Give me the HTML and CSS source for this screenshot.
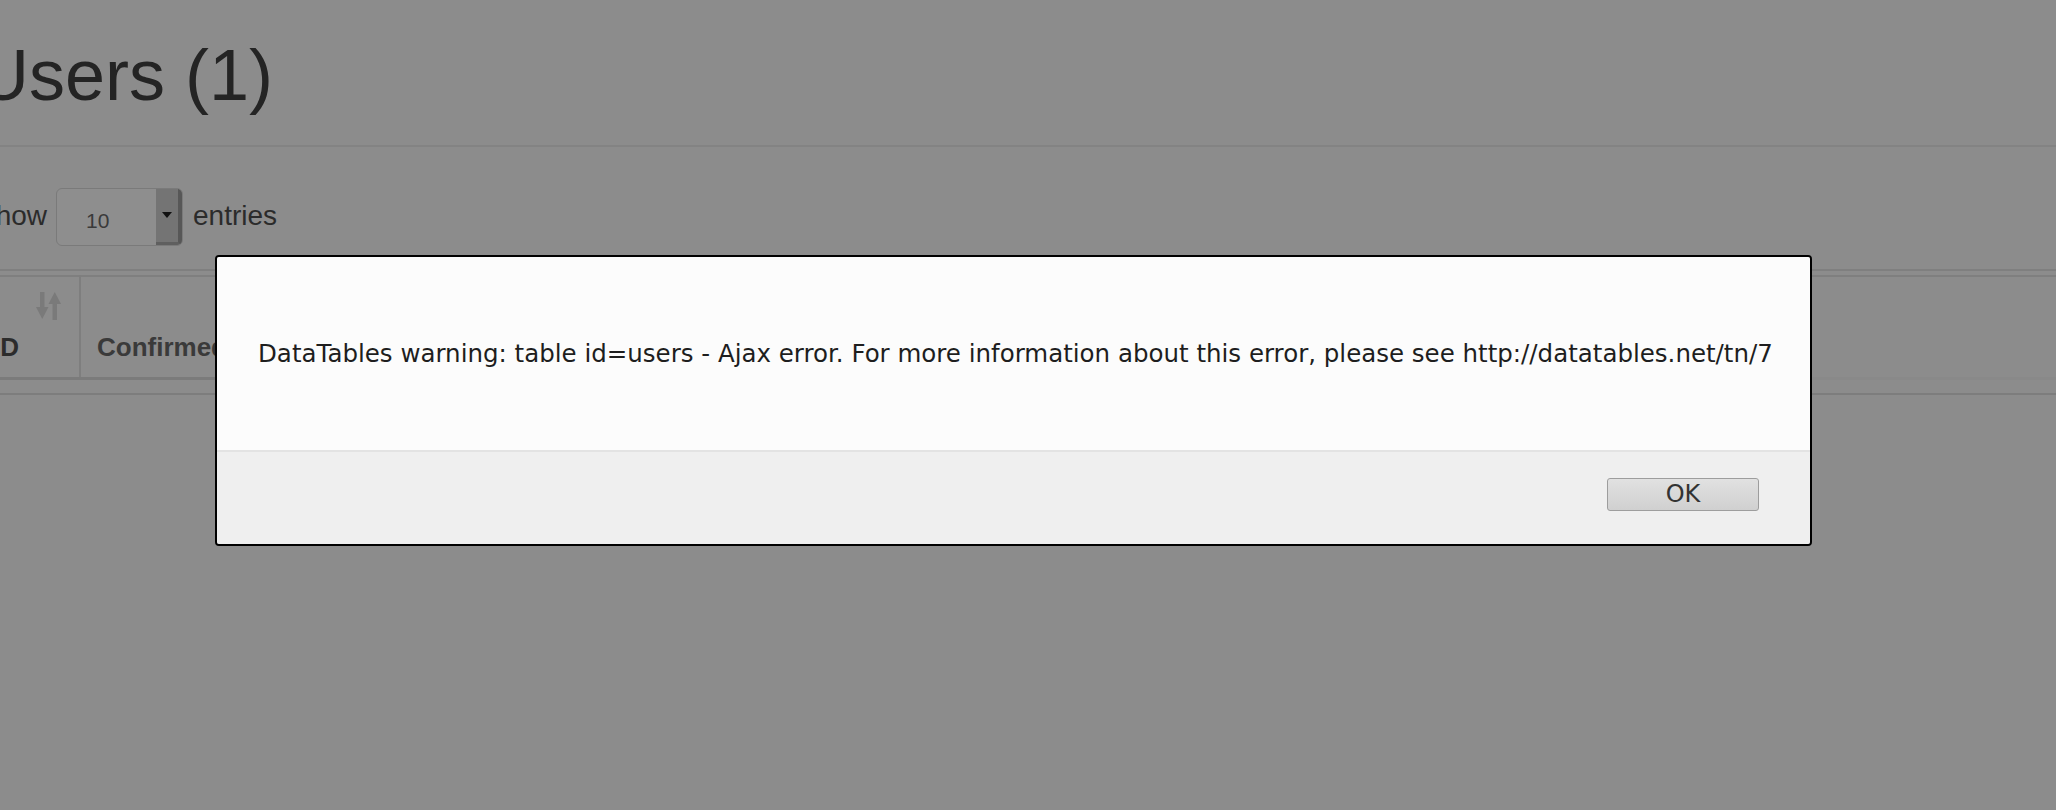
FILE: index.html
```html
<!DOCTYPE html>
<html lang="en">
<head>
<meta charset="utf-8">
<title>Users</title>
<link rel="stylesheet" href="styles.css">
</head>
<body>
<div class="page">
  <div class="page-header">
    <h1 class="title">Users (1)</h1>
  </div>
  <div class="length">
    <span class="length-label">Show</span>
    <div class="select">
      <span class="select-value">10</span>
      <span class="select-button"><span class="caret"></span></span>
    </div>
    <span class="length-label">entries</span>
  </div>
  <div class="table-wrap">
    <table class="table">
      <thead>
        <tr>
          <th class="col-id">
            <svg class="sort-icon" viewBox="0 0 26 28" width="26" height="28" aria-hidden="true">
              <rect x="4" y="0" width="4.5" height="18" />
              <polygon points="0,15 12.5,15 6.25,27" />
              <polygon points="12.5,12 25,12 18.75,0" />
              <rect x="16.5" y="10" width="4.5" height="18" />
            </svg>
            ID
          </th>
          <th class="col-confirmed">Confirmed</th>
          <th class="col-rest"></th>
        </tr>
      </thead>
    </table>
    <div class="table-foot"></div>
  </div>
</div>

<div class="dialog" role="alertdialog">
  <div class="dialog-body">
    <p class="dialog-text">DataTables warning: table id=users - Ajax error. For more information about this error, please see http://datatables.net/tn/7</p>
  </div>
  <div class="dialog-footer">
    <button class="dialog-button" type="button">OK</button>
  </div>
</div>
</body>
</html>
```

FILE: styles.css
```css
html, body {
  margin: 0;
  padding: 0;
}

body {
  background: #8c8c8c;
  width: 2056px;
  height: 810px;
  overflow: hidden;
  font-family: "Liberation Sans", Arial, sans-serif;
  color: #2a2a2a;
}

.page {
  margin-left: -23px;
  width: 2079px;
}

.page-header {
  padding-top: 36px;
  padding-bottom: 30px;
  border-bottom: 2px solid #838383;
}

.title {
  margin: 0;
  font-size: 72px;
  font-weight: 400;
  line-height: 79px;
  color: #242424;
}

.length {
  display: flex;
  align-items: center;
  margin-top: 41px;
  height: 58px;
  font-size: 28px;
  color: #2b2b2b;
}

.length-label {
  position: relative;
  top: -1px;
}

.select {
  display: flex;
  width: 127px;
  height: 58px;
  box-sizing: border-box;
  margin: 0 10px 0 9px;
  border: 1px solid #7a7a7a;
  border-radius: 6px;
  background: #8e8e8e;
  overflow: hidden;
}

.select-value {
  flex: 1;
  padding-left: 29px;
  padding-top: 9px;
  font-size: 21px;
  line-height: 46px;
  color: #3a3a3a;
}

.select-button {
  width: 26px;
  display: flex;
  justify-content: center;
  padding-top: 23px;
  box-sizing: border-box;
  background: #747474;
  border-right: 4px solid #575757;
  border-bottom: 3px solid #5f5f5f;
}

.caret {
  width: 0;
  height: 0;
  border-left: 5px solid transparent;
  border-right: 5px solid transparent;
  border-top: 6px solid #111;
}

.table-wrap {
  margin-top: 23px;
  border-top: 2px solid #7f7f7f;
  padding-top: 4px;
}

.table {
  width: 100%;
  border-collapse: collapse;
  border-top: 2px solid #7f7f7f;
}

.table th {
  height: 102px;
  padding: 0 16px 15px;
  box-sizing: border-box;
  vertical-align: bottom;
  text-align: left;
  font-size: 26px;
  font-weight: 700;
  line-height: 30px;
  color: #2c2c2c;
  border-bottom: 3px solid #7b7b7b;
}

.table th.col-id {
  position: relative;
  width: 103px;
  border-right: 2px solid #7e7e7e;
}

.sort-icon {
  position: absolute;
  top: 15px;
  right: 17px;
  fill: #7a7a7a;
}

.table th.col-confirmed {
  width: 1660px;
  color: #3a3a3a;
}

.table th.col-rest {
  border-bottom-color: #898989;
}

.table-foot {
  margin-top: 13px;
  border-top: 2px solid #7d7d7d;
}

.dialog {
  position: absolute;
  left: 215px;
  top: 255px;
  width: 1597px;
  height: 291px;
  box-sizing: border-box;
  border: 2px solid #000;
  border-radius: 4px;
  display: flex;
  flex-direction: column;
  overflow: hidden;
  font-family: "DejaVu Sans", sans-serif;
}

.dialog-body {
  flex: 1;
  display: flex;
  align-items: center;
  padding-left: 41px;
  background: #fcfcfc;
}

.dialog-text {
  margin: 0;
  font-size: 24.5px;
  line-height: 28px;
  color: #1e1e1e;
  white-space: nowrap;
}

.dialog-footer {
  height: 94px;
  box-sizing: border-box;
  border-top: 2px solid #e3e3e3;
  background: #efefef;
  display: flex;
  justify-content: flex-end;
  align-items: flex-start;
  padding: 26px 51px 0 0;
}

.dialog-button {
  width: 152px;
  height: 33px;
  padding: 0;
  border: 1px solid #9d9d9d;
  border-radius: 3px;
  background: linear-gradient(#e1e1e1, #d0d0d0);
  font-family: "DejaVu Sans", sans-serif;
  font-size: 24px;
  line-height: 31px;
  color: #333;
}
```
